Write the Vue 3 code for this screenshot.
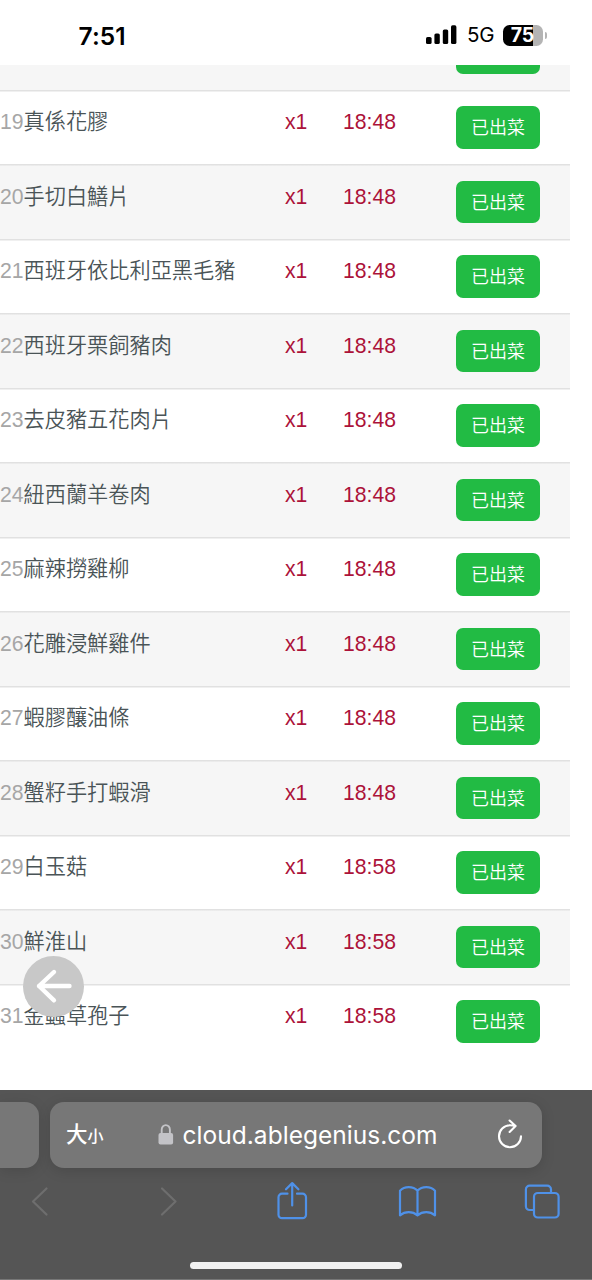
<script setup>
const names = [
  '真係花膠', '手切白鱔片', '西班牙依比利亞黑毛豬', '西班牙栗飼豬肉', '去皮豬五花肉片',
  '紐西蘭羊卷肉', '麻辣撈雞柳', '花雕浸鮮雞件', '蝦膠釀油條', '蟹籽手打蝦滑',
  '白玉菇', '鮮淮山', '金蟲草孢子',
]
const rows = names.map((name, i) => ({
  no: i + 19,
  name,
  qty: 'x1',
  time: i < 10 ? '18:48' : '18:58',
}))
</script>

<template>
  <div class="screen">
    <header class="status">
      <span class="clock">7:51</span>
      <div class="indicators">
        <svg class="signal" width="31" height="20" viewBox="0 0 31 20">
          <rect x="0" y="12" width="5.6" height="7" rx="1.6" />
          <rect x="8.4" y="8.5" width="5.4" height="10.5" rx="1.6" />
          <rect x="16.8" y="4.5" width="5.4" height="14.5" rx="1.6" />
          <rect x="25" y="0.3" width="5.4" height="18.7" rx="1.6" />
        </svg>
        <span class="network">5G</span>
        <span class="battery">75</span>
        <span class="battery-tip"></span>
      </div>
    </header>

    <main class="content">
      <div class="partial"><span class="partial-btn"></span></div>
      <div v-for="row in rows" :key="row.no" class="row" :class="{ striped: row.no % 2 === 0 }">
        <div class="dish"><span class="no">{{ row.no }}</span><span class="name">{{ row.name }}</span></div>
        <span class="qty">{{ row.qty }}</span>
        <span class="time">{{ row.time }}</span>
        <button class="done">已出菜</button>
      </div>
      <button class="back" aria-label="Back">
        <svg width="61" height="61" viewBox="0 0 61 61" fill="none" stroke="#fff" stroke-width="4.4" stroke-linecap="round" stroke-linejoin="round">
          <path d="M46.5 30H16M31 16 16 30l15 14.3" />
        </svg>
      </button>
    </main>

    <footer class="browser">
      <div class="tabs">
        <div class="prev-tab"></div>
        <div class="address">
          <span class="size"><span class="big">大</span><span class="small">小</span></span>
          <div class="site">
            <svg width="16" height="22" viewBox="0 0 16 22">
              <path d="M3.7 10V5.8a4.1 4.7 0 0 1 8.2 0V10" fill="none" stroke="#c3c3c7" stroke-width="1.9" />
              <rect x="0.5" y="9" width="14.6" height="11.5" rx="2" fill="#c3c3c7" />
            </svg>
            <span class="url">cloud.ablegenius.com</span>
          </div>
          <svg class="reload" width="26" height="30" viewBox="0 0 26 30" fill="none" stroke="#fff" stroke-width="2.100" stroke-linecap="round" stroke-linejoin="round">
            <path d="M24 16.2A11 11 0 1 1 13 5.2c2 0 3.3.1 5.3.9M12.6 0.500l6 5.600-6 5.900" />
          </svg>
        </div>
      </div>
      <nav class="tools">
        <svg width="592" height="44" viewBox="0 1180 592 44" fill="none" stroke="#4f91e8" stroke-width="2.2" stroke-linecap="round" stroke-linejoin="round">
          <path class="muted" d="M46.5 1188.5 33 1201.5l13.500 13" />
          <path class="muted" d="M162 1188.500 175.500 1201.500 162 1214.500" />
          <path d="M287.500 1193.700H282a3.500 3.500 0 0 0-3.500 3.500v17.500a3.500 3.500 0 0 0 3.500 3.500h20.500a3.500 3.500 0 0 0 3.500-3.500v-17.500a3.500 3.500 0 0 0-3.500-3.500H297M292.200 1205.500v-22M286 1189.300l6.200-6.200 6.200 6.200" />
          <path d="M400 1215.300v-24.500c4.500-4.800 13-4.800 17.500 0 4.500-4.800 13-4.800 17.500 0v24.500c-5-4.300-12.500-4.300-17.500 0-5-4.300-12.500-4.300-17.500 0ZM417.500 1190.800v24.500" />
          <path d="M533.500 1210h-3.800a3.800 3.800 0 0 1-3.800-3.800v-16.700a3.800 3.800 0 0 1 3.800-3.800h17.500a3.800 3.800 0 0 1 3.800 3.800v3.500" />
          <rect x="534" y="1193" width="24.600" height="24.500" rx="3.800" />
        </svg>
      </nav>
      <div class="home"></div>
    </footer>
  </div>
</template>

<style>
body { margin: 0; background: #fff; }
</style>

<style scoped>
.screen {
  width: 592px;
  height: 1280px;
  display: flex;
  flex-direction: column;
  overflow: hidden;
  background: #fff;
  font-family: "Liberation Sans", "Noto Sans CJK TC", sans-serif;
}
button { border: 0; padding: 0; font-family: inherit; }
.status {
  height: 65px;
  flex: none;
  display: flex;
  justify-content: space-between;
  box-sizing: border-box;
  padding: 0 45.500px 0 78.500px;
  color: #000;
  font-family: Inter, sans-serif;
}
.clock { font-size: 24.5px; font-weight: 600; line-height: 72px; letter-spacing: 0.1px; }
.indicators { display: flex; align-items: center; height: 70px; }
.network { font-size: 20.5px; margin-left: 10px; width: 27px; line-height: 72px; letter-spacing: -0.3px; }
.battery {
  width: 40px;
  height: 21px;
  box-sizing: border-box;
  padding-right: 1px;
  margin-left: 9px;
  border-radius: 6.5px;
  background: linear-gradient(90deg, #000 75%, #b4b4b4 75%);
  color: #fff;
  font-size: 19.500px;
  font-weight: 700;
  line-height: 21px;
  text-align: center;
}
.battery-tip { width: 2px; height: 7px; margin-left: 1.500px; border-radius: 0 3px 3px 0; background: #b4b4b4; }
.content { position: relative; height: 1025px; flex: none; }
.partial {
  width: 570px;
  height: 24.500px;
  background: #f6f6f6;
  display: flex;
}
.partial-btn { width: 84px; height: 9px; margin-left: 456px; border-radius: 0 0 7px 7px; background: #22bb44; }
.row {
  width: 570px;
  height: 74.500px;
  box-sizing: border-box;
  padding-top: 16.600px;
  display: grid;
  grid-template-columns: 285px 58px 113px 84px;
  align-items: start;
  background: linear-gradient(#e1e1e1, #e1e1e1) 0 0 / 100% 1.500px no-repeat;
  font-size: 21.200px;
  line-height: 32px;
}
.striped { background-color: #f6f6f6; }
.dish { white-space: nowrap; display: flex; }
.no { width: 23.500px; color: #a6a6a6; }
.name { color: #4a5457; font-weight: 350; }
.qty, .time { color: #ac1239; }
.done {
  width: 84px;
  height: 42.500px;
  border-radius: 7px;
  background: #22bb44;
  color: #fff;
  font-size: 18px;
  font-weight: 350;
  line-height: 42px;
  padding-top: 1px;
}
.back {
  position: absolute;
  left: 23px;
  top: 891px;
  width: 61px;
  height: 61px;
  border-radius: 50%;
  background: #c8c8c8;
}
.back svg { display: block; }
.browser {
  height: 190px;
  flex: none;
  display: flex;
  flex-direction: column;
  box-sizing: border-box;
  padding-top: 12px;
  background: #555;
  border-bottom: 1px solid #777;
}
.tabs { display: flex; gap: 11px; height: 66px; flex: none; }
.prev-tab { width: 39px; border-radius: 0 14px 14px 0; background: #777; box-shadow: 0 3px 14px rgba(0, 0, 0, 0.12); }
.address {
  width: 492px;
  box-sizing: border-box;
  padding: 0 19px 0 16px;
  display: flex;
  align-items: center;
  border-radius: 14px;
  background: #777;
  box-shadow: 0 3px 14px rgba(0, 0, 0, 0.14);
  color: #fff;
}
.size { width: 91.500px; display: flex; align-items: baseline; padding-bottom: 5px; font-family: "Noto Sans CJK TC", sans-serif; font-weight: 500; }
.big { font-size: 21.500px; }
.small { font-size: 16px; }
.site { flex: 1; display: flex; align-items: center; gap: 9px; white-space: nowrap; }
.url { font: 24.500px/30px Inter, sans-serif; letter-spacing: 0.03px; }
.reload { flex: none; overflow: visible; }
.tools { height: 44px; margin-top: 12px; flex: none; }
.tools svg { display: block; }
.tools .muted { stroke: #6e6e6e; }
.home { width: 212px; height: 7px; margin: 38px 0 0 190px; border-radius: 4px; background: #f1f1f1; }
</style>
